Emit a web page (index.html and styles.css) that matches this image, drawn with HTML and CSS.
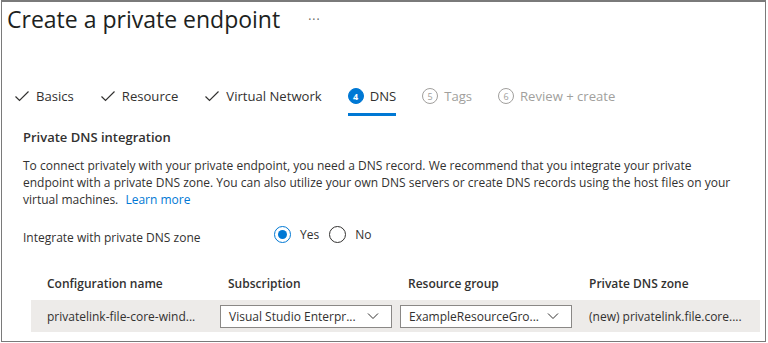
FILE: index.html
```html
<!DOCTYPE html>
<html>
<head>
<meta charset="utf-8">
<link rel="stylesheet" href="styles.css">
</head>
<body>
<div class="frame">
  <header class="title-row">
    <h1 class="title">Create a private endpoint</h1>
    <span class="more">···</span>
  </header>
  <nav class="tabs">
    <div class="tab done"><svg class="check" viewBox="0 0 16 16" width="16" height="16"><path d="M1.5 8.5 L5.5 12.5 L14.5 3.5" fill="none" stroke="#323130" stroke-width="1.2"/></svg><span>Basics</span></div>
    <div class="tab done"><svg class="check" viewBox="0 0 16 16" width="16" height="16"><path d="M1.5 8.5 L5.5 12.5 L14.5 3.5" fill="none" stroke="#323130" stroke-width="1.2"/></svg><span>Resource</span></div>
    <div class="tab done"><svg class="check" viewBox="0 0 16 16" width="16" height="16"><path d="M1.5 8.5 L5.5 12.5 L14.5 3.5" fill="none" stroke="#323130" stroke-width="1.2"/></svg><span>Virtual Network</span></div>
    <div class="tab active"><span class="num filled">4</span><span>DNS</span></div>
    <div class="tab disabled"><span class="num">5</span><span>Tags</span></div>
    <div class="tab disabled"><span class="num">6</span><span>Review + create</span></div>
  </nav>
  <section class="content">
    <h2 class="section-title">Private DNS integration</h2>
    <p class="desc">To connect privately with your private endpoint, you need a DNS record. We recommend that you integrate your private<br>endpoint with a private DNS zone. You can also utilize your own DNS servers or create DNS records using the host files on your<br>virtual machines. <a class="link">Learn more</a></p>
    <div class="field">
      <span class="field-label">Integrate with private DNS zone</span>
      <div class="radios">
        <label class="radio"><span class="dot checked"></span>Yes</label>
        <label class="radio"><span class="dot"></span>No</label>
      </div>
    </div>
    <div class="table">
      <div class="thead">
        <div class="th">Configuration name</div>
        <div class="th">Subscription</div>
        <div class="th">Resource group</div>
        <div class="th">Private DNS zone</div>
      </div>
      <div class="trow">
        <div class="td">privatelink-file-core-wind...</div>
        <div class="td"><div class="select"><span>Visual Studio Enterpr...</span><svg viewBox="0 0 12 12" width="12" height="12"><path d="M1 3.5 L6 8.5 L11 3.5" fill="none" stroke="#323130" stroke-width="1"/></svg></div></div>
        <div class="td"><div class="select"><span>ExampleResourceGro...</span><svg viewBox="0 0 12 12" width="12" height="12"><path d="M1 3.5 L6 8.5 L11 3.5" fill="none" stroke="#323130" stroke-width="1"/></svg></div></div>
        <div class="td">(new) privatelink.file.core....</div>
      </div>
    </div>
  </section>
</div>
</body>
</html>
```
FILE: styles.css
```css
* { box-sizing: border-box; }
html, body { margin: 0; padding: 0; background: #fff; }
body {
  font-family: "Open Sans", "Noto Sans", sans-serif;
  color: #323130;
  width: 768px;
  height: 343px;
  overflow: hidden;
}
.frame {
  margin-left: 1px;
  width: 765px;
  height: 342px;
  border: 1px solid #7a7a7a;
  border-top: 2px solid #7a7a7a;
  overflow: hidden;
}
.title-row {
  display: flex;
  align-items: center;
  height: 34px;
  padding-left: 5px;
}
.title {
  margin: 0;
  font-size: 23px;
  font-weight: 400;
  line-height: 30px;
  color: #201f1e;
}
.more {
  margin-left: 28px;
  font-size: 12px;
  color: #605e5c;
  letter-spacing: 1px;
}
.tabs {
  display: flex;
  margin-top: 43px;
  padding-left: 12px;
  height: 37px;
}
.tab {
  display: flex;
  align-items: center;
  height: 37px;
  font-size: 13.1px;
  margin-right: 26px;
  border-bottom: 3px solid transparent;
}
.tab .check { margin-right: 6px; }
.tab.active { border-bottom-color: #0078d4; }
.tab.disabled { color: #a19f9d; }
.num {
  width: 16px;
  height: 16px;
  border-radius: 50%;
  border: 1px solid #a19f9d;
  font-size: 9px;
  display: inline-flex;
  align-items: center;
  justify-content: center;
  margin-right: 6px;
  line-height: 1;
  color: #a19f9d;
}
.num.filled {
  background: #0078d4;
  border-color: #0078d4;
  color: #fff;
  font-weight: 700;
}
.content {
  padding-left: 21px;
  padding-top: 12px;
}
.section-title {
  margin: 0;
  font-size: 13px;
  font-weight: 600;
  line-height: 18px;
}
.desc {
  margin: 11px 0 0;
  font-size: 12px;
  line-height: 17px;
  white-space: nowrap;
}
.link { color: #0078d4; margin-left: 4px; }
.field {
  display: flex;
  align-items: center;
  margin-top: 15px;
  font-size: 12px;
}
.field-label { width: 251px; padding-top: 6px; }
.radios { display: flex; gap: 10px; }
.radio { display: flex; align-items: center; }
.dot {
  width: 17px;
  height: 17px;
  border-radius: 50%;
  border: 1px solid #323130;
  margin-right: 9px;
  position: relative;
}
.dot.checked { border-color: #0078d4; }
.dot.checked::after {
  content: "";
  position: absolute;
  left: 3px; top: 3px;
  width: 9px; height: 9px;
  border-radius: 50%;
  background: #0078d4;
}
.table { margin-top: 26px; margin-left: 8px; width: 729px; font-size: 12px; }
.thead, .trow {
  display: grid;
  grid-template-columns: 181px 180px 181px 1fr;
}
.thead { height: 28px; align-items: center; padding-bottom: 5px; }
.th { font-weight: 600; padding-left: 16px; }
.trow {
  background: #edebe9;
  height: 32px;
  align-items: center;
}
.td { padding-left: 16px; white-space: nowrap; }
.td:nth-child(2), .td:nth-child(3) { padding-left: 8px; }
.select {
  width: 172px;
  height: 23px;
  background: #fff;
  border: 1px solid #8a8886;
  display: flex;
  align-items: center;
  justify-content: space-between;
  padding: 0 12px 0 8px;
}
```
